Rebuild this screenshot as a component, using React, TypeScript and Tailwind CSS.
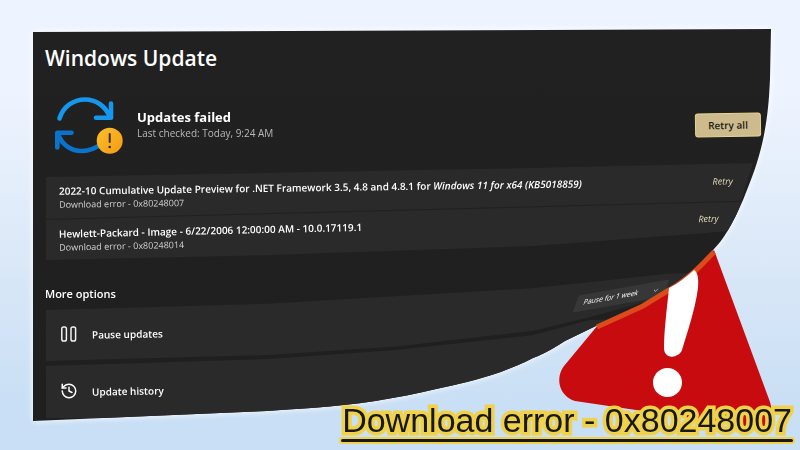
import { History } from "lucide-react";

function PanelOutline() {
  return (
    <svg className="absolute h-0 w-0" aria-hidden="true">
      <defs>
        <clipPath id="page-curl" clipPathUnits="objectBoundingBox">
          <path
            transform="scale(0.001355 0.002551) translate(-33 -29)"
            d="M33 32 L771 29 L770 79 C769 100 768 114 764 135 C760 155 754 173 747 190 C742 203 737 214 731 225 C726 234 720 243 714 249 C708 256 701 264 694 270 C687 276 679 283 669 288 L643 304 L598 325 L565 341 C554 348 544 354 533 358 C512 369 490 376 467 382 C428 391 386 401 344 405 C318 408 292 409 267 411 L33 421 Z"
          />
        </clipPath>
      </defs>
    </svg>
  );
}

function SyncIcon() {
  return (
    <svg viewBox="55 96 68 58" className="h-[58px] w-[68px] shrink-0" fill="none" aria-hidden="true">
      <defs>
        <linearGradient id="badge" x1="0" y1="0" x2="1" y2="1">
          <stop offset="0" stopColor="#fbc02f" />
          <stop offset="1" stopColor="#f59a12" />
        </linearGradient>
      </defs>
      <g strokeWidth="4.6" strokeLinecap="round" strokeLinejoin="round">
        <path d="M59.5 118.500C63 107 73 99.500 85 99.500C96 99.500 105 106 109.500 116" stroke="#1597ee" />
        <path d="M111 103.500V117.800H96" stroke="#1597ee" />
        <path d="M58.500 135C62 144.500 71 151 82 151C89 151 96 148 101 144" stroke="#0a74cd" />
        <path d="M57.300 147.500V132.700H71.500" stroke="#0a74cd" />
      </g>
      <circle cx="109.700" cy="140.800" r="13" fill="url(#badge)" />
      <path d="M109.700 134v8" stroke="#3a2a08" strokeWidth="2" strokeLinecap="round" />
      <circle cx="109.700" cy="147" r="1.300" fill="#3a2a08" />
    </svg>
  );
}

function PauseIcon() {
  return (
    <svg viewBox="0 0 18 18" className="h-[18px] w-[18px]" fill="none" stroke="#f2f2f2" strokeWidth="1.5" aria-hidden="true">
      <rect x="1.800" y="2" width="4.600" height="14" rx="1.800" />
      <rect x="11" y="2" width="4.600" height="14" rx="1.800" />
    </svg>
  );
}

function WarningSign() {
  return (
    <svg
      viewBox="555 245 225 190"
      className="absolute right-[20px] bottom-[15px] h-[190px] w-[225px]"
      aria-hidden="true"
    >
      <path
        d="M714 250 L770 402 C774 416 770 429 758 428 L575 401 C559 396 555 378 564 366 L598 325 L643 304 L669 288 C679 283 687 276 694 270 C701 264 708 256 714 250 Z"
        fill="#c80b0e"
      />
      <path
        d="M597 327 L643 306 L669 290 C679 285 687 278 694 272 C701 266 708 258 714 252"
        fill="none"
        stroke="#dc4b1c"
        strokeWidth="5"
      />
      <path
        d="M669 288 C679 283 687 276 694 270 C697 272 699 276 698 288 C695 310 688 330 682 350 C679 358 665 360 664 349 C664 330 667 308 669 288 Z"
        fill="#fff"
      />
      <circle cx="667.500" cy="382.500" r="14.500" fill="#fff" />
    </svg>
  );
}

export default function App() {
  return (
    <main className="relative min-h-screen overflow-hidden bg-linear-to-b from-[#eef4ff] from-20% via-[#dce9f8] via-55% to-[#c9dff5] to-90% pt-[29px] pr-[29px] pl-[33px] font-['Open_Sans','Noto_Sans',sans-serif] text-white">
      <PanelOutline />
      <div className="drop-shadow-[0_0_3px_#ffffff]">
        <section className="bg-linear-to-b from-[#212122] to-[#201f1f] pt-[15px] pr-[10px] pb-[3px] pl-3 [clip-path:url(#page-curl)]">
          <h1 className="text-[21px] leading-7 font-semibold">Windows Update</h1>

          <header className="mt-6 flex items-center gap-[14px] pl-[10px]">
            <SyncIcon />
            <div className="flex-1">
              <h2 className="text-[13px] leading-4 font-bold">Updates failed</h2>
              <p className="text-[10px] leading-4 font-medium text-[#b9b9b9]">Last checked: Today, 9:24 AM</p>
            </div>
            <button className="h-6 w-[66px] -rotate-1 rounded-[3px] border border-[#e6d68f] bg-[#cdbb8e] text-[10px] font-semibold text-[#1c1a14]">
              Retry all
            </button>
          </header>

          <ul className="mt-[9px] mr-2 ml-px bg-[#2b2a2b] pt-[21px] pb-[5px] [clip-path:polygon(0_14.4%,31%_10.3%,69%_5.2%,100%_0,97%_70%,69%_85.5%,31%_95%,0_100%)]">
            <li className="flex origin-left rotate-[-0.8deg] items-start pr-5 pl-[13px]">
              <div className="flex-1">
                <p className="text-[10px] leading-[14px] font-semibold whitespace-nowrap">
                  2022-10 Cumulative Update Preview for .NET Framework 3.5, 4.8 and 4.8.1 for{" "}
                  <em>Windows 11 for x64 (KB5018859)</em>
                </p>
                <p className="text-[9px] leading-[14px] text-[#d0d0d0]">Download error - 0x80248007</p>
              </div>
              <button className="text-[9px] leading-[14px] font-medium text-[#e4dcb8] italic">Retry</button>
            </li>
            <li className="my-[7px] h-px origin-left rotate-[-1.5deg] bg-[#222122]" aria-hidden="true" />
            <li className="flex origin-left rotate-[-1.3deg] items-start pr-[34px] pl-[13px]">
              <div className="flex-1">
                <p className="text-[10px] leading-[14px] font-semibold">
                  Hewlett-Packard - Image - 6/22/2006 12:00:00 AM - 10.0.17119.1
                </p>
                <p className="text-[9px] leading-[14px] text-[#d0d0d0]">Download error - 0x80248014</p>
              </div>
              <button className="text-[9px] leading-[14px] font-medium text-[#e4dcb8] italic">Retry</button>
            </li>
          </ul>

          <h3 className="mt-6 text-[11px] leading-5 font-semibold">More options</h3>

          <div className="-mt-[34px] ml-px flex h-[91px] items-start bg-[#2b2a2b] pl-[14px] [clip-path:polygon(0_44%,31%_37%,68%_20%,87%_4%,100%_0,76%_52%,68%_67%,49%_84%,31%_93.5%,0_100%)]">
            <div className="mt-[55px] flex flex-1 items-center gap-[14px]">
              <PauseIcon />
              <label htmlFor="pause-length" className="-rotate-1 text-[10px] leading-[18px] font-semibold">
                Pause updates
              </label>
            </div>
            <div className="mt-[18px] mr-[94px] flex w-[92px] rotate-[-10deg] skew-x-[-30deg] items-center rounded-[2px] bg-[#373738]">
              <select
                id="pause-length"
                className="h-4 flex-1 appearance-none pl-2 text-[7px] leading-4 text-white"
              >
                <option>Pause for 1 week</option>
              </select>
              <span className="pr-2 text-[6px]" aria-hidden="true">
                ⌵
              </span>
            </div>
          </div>

          <div className="-mt-[44px] ml-px flex h-[101px] items-start bg-[#2b2a2b] pl-[14px] [clip-path:polygon(0_48.5%,31%_41.6%,49%_32.7%,68%_18%,76%_3%,100%_0,100%_100%,0_100%)]">
            <button className="mt-[65px] flex items-center gap-[14px]">
              <History size={18} strokeWidth={2} aria-hidden="true" />
              <span className="-rotate-1 text-[10px] leading-[18px] font-semibold">Update history</span>
            </button>
          </div>
        </section>
      </div>

      <WarningSign />

      <footer className="relative -mt-[18px] -mr-6 flex justify-end font-['Liberation_Sans',Arial,sans-serif]">
        <div>
          <div className="relative px-[3px] text-[34px] leading-[34px] whitespace-nowrap text-[#171713]">
            <p className="[-webkit-text-stroke:7px_#f0d24a] [paint-order:stroke_fill] [stroke-linejoin:round]">
              Download error - 0x80248007
            </p>
          </div>
          <div className="h-[7px] rounded-full border-2 border-[#f0d24a] bg-[#171713]" />
        </div>
      </footer>
    </main>
  );
}
